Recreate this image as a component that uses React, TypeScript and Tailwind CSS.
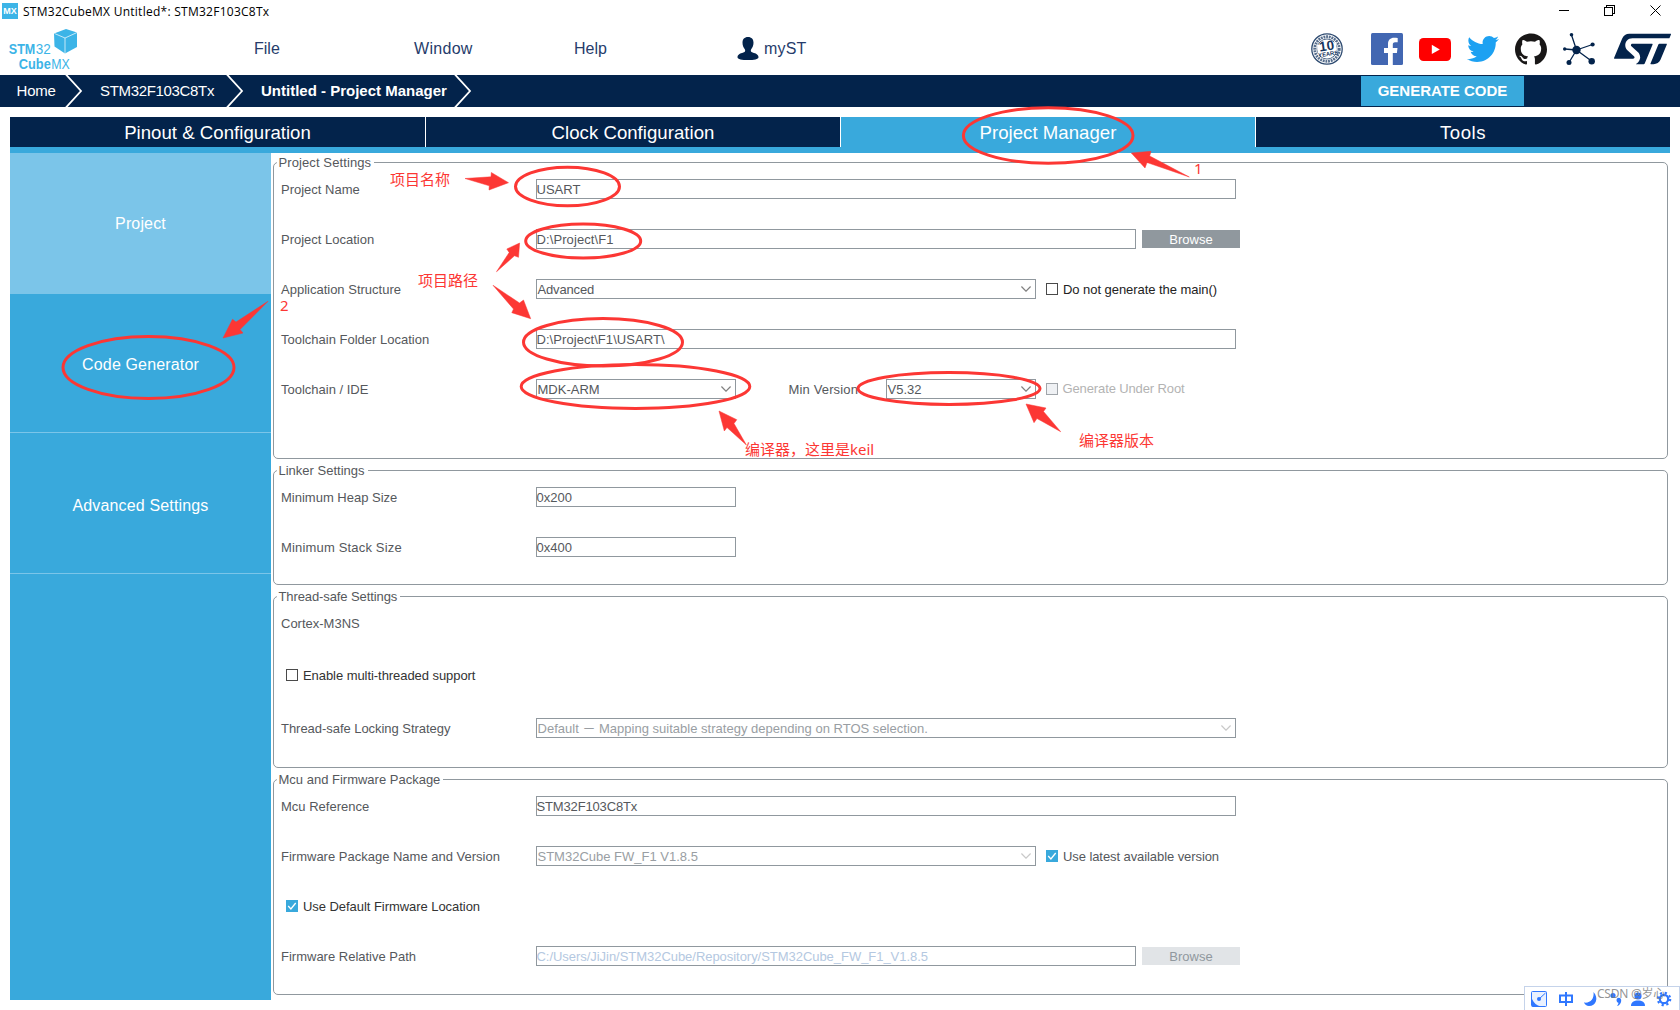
import type { ReactNode } from "react";
import { FaTwitter } from "react-icons/fa";
import { SiGithub, SiStmicroelectronics } from "react-icons/si";

const ARIAL = "font-['Liberation_Sans',Arial,sans-serif]";
const CJK = "font-['Noto_Sans','Noto_Sans_CJK_SC',sans-serif]";

function TitleBar() {
  return (
    <div className="flex h-[22px] items-center pl-[2px] pr-[19px]">
      <div className="flex h-4 w-4 items-center justify-center bg-[#3cb4e7] text-[9px] leading-none font-bold text-white">MX</div>
      <span className="ml-[5px] pt-px font-['Open_Sans','Noto_Sans',sans-serif] text-[12px] tracking-[0.26px] whitespace-nowrap text-black">
        STM32CubeMX Untitled*: STM32F103C8Tx
      </span>
      <div className="ml-auto flex items-center gap-[35px] pb-[2px] text-black">
        <svg width="11" height="11" viewBox="0 0 11 11" shapeRendering="crispEdges"><path d="M0.5 5.5h10" stroke="currentColor" /></svg>
        <svg width="11" height="11" viewBox="0 0 11 11" fill="none" stroke="currentColor" shapeRendering="crispEdges"><path d="M.5 2.5h7.5v8h-7.5zM2.5 2.5V.5h8v7.5h-2.5" /></svg>
        <svg width="11" height="11" viewBox="0 0 11 11" stroke="currentColor"><path d="M.5.5l10 10M10.5.5l-10 10" /></svg>
      </div>
    </div>
  );
}

function CubeLogo() {
  return (
    <svg className="h-[44px] w-[72px] overflow-visible" viewBox="7 29 72 44" fill="#3cb4e7">
      <path d="M54 33.500L66 29l11 3.500v14.500L65 53.500 54.500 46.500z" />
      <path d="M54.500 33.500L65 38l12-5.500M65 38V53.500" stroke="#fff" strokeWidth="0.7" fill="none" />
      <g fontFamily="'Liberation Sans Narrow','Liberation Sans',Arial,sans-serif" fontSize="15">
        <text x="8.800" y="54.300" fontWeight="700" textLength="26.500" lengthAdjust="spacingAndGlyphs">STM</text>
        <text x="35.800" y="54.300" textLength="15" lengthAdjust="spacingAndGlyphs">32</text>
        <text x="18.800" y="68.700" fontWeight="700" textLength="32" lengthAdjust="spacingAndGlyphs">Cube</text>
        <text x="51.300" y="68.700" textLength="18.500" lengthAdjust="spacingAndGlyphs">MX</text>
      </g>
    </svg>
  );
}

function LongevityBadge() {
  return (
    <svg width="32" height="32" viewBox="0 0 32 32" fill="none" stroke="#2d4a70">
      <circle cx="16" cy="16" r="15.200" strokeWidth="1.300" />
      <circle cx="16" cy="16" r="12.300" strokeWidth="2.800" strokeDasharray="1.900 0.800" opacity="0.800" />
      <circle cx="16" cy="16" r="10" strokeWidth="0.800" />
      <path d="M6 12l19-3 1 10-19 3z" fill="#fff" stroke="none" />
      <g fill="#17355e" stroke="none" fontFamily="'Liberation Sans',Arial,sans-serif" fontWeight="700" textAnchor="middle" transform="rotate(-8 16 16)">
        <text x="16" y="17.500" fontSize="13.500">10</text>
        <text x="16.500" y="23" fontSize="5.800">YEARS</text>
      </g>
    </svg>
  );
}

function Header() {
  return (
    <div className="flex h-[53px] items-start">
      <div className="w-[254px] pt-[7px] pl-[7px]"><CubeLogo /></div>
      <nav className="flex h-[53px] items-center pt-[1px] text-[16px] text-[#263c6b]">
        <span className="w-[160px]">File</span>
        <span className="w-[160px] tracking-[0.3px]">Window</span>
        <span className="w-[163px]">Help</span>
        <svg className="-mt-[2px]" width="22" height="23" viewBox="0 0 22 23" fill="#03234b">
          <path d="M11 0c3.600 0 5.500 2.200 5.500 5.600 0 2.600-.8 5-2.300 6.600-.6.700-.5 2.300.3 2.700 3 1.300 7 1.800 7 5.300 0 2.200-4.500 2.800-10.500 2.800S.5 22.400.5 20.200c0-3.500 4-4 7-5.300.8-.4.9-2 .3-2.700C6.300 10.600 5.500 8.200 5.500 5.600 5.500 2.200 7.400 0 11 0z" />
        </svg>
        <span className="ml-[5px] tracking-[0.2px]">myST</span>
      </nav>
      <div className="mt-[11px] ml-auto flex h-[32px] items-center gap-4 pr-[9px]">
        <div className="mr-3"><LongevityBadge /></div>
        <svg width="32" height="32" viewBox="0 0 32 32"><rect width="32" height="32" rx="1.500" fill="#4267b2" /><path d="M17 32V20h-4v-5h4v-4c0-4 2.500-6.200 6-6.200 1.700 0 3 .1 3.700.2v4.300h-2.500c-2 0-2.400 1-2.400 2.300V15h4.700l-.6 5h-4.100v12z" fill="#fff" /></svg>
        <svg width="32" height="23" viewBox="0 0 32 23"><rect width="32" height="23" rx="4.500" fill="#f00" /><path d="M12.800 6.800l8 4.600-8 4.700z" fill="#fff" /></svg>
        <FaTwitter className="h-8 w-8 text-[#1da1f2]" />
        <SiGithub className="h-8 w-8 text-[#191717]" />
        <svg width="32" height="32" viewBox="0 0 32 32" fill="#03234b" stroke="#03234b" strokeWidth="1.300">
          <path d="M13.500 17L8.500 2M13.500 17L29.500 11.500M13.500 17L2 16M13.500 17L6 29.500M13.500 17L28.500 28" fill="none" />
          <g stroke="none"><circle cx="13.500" cy="17" r="4.200" /><circle cx="8.500" cy="1.800" r="1.800" /><circle cx="29.600" cy="11.500" r="2.100" /><circle cx="1.700" cy="16" r="1.700" /><circle cx="6" cy="29.500" r="2.500" /><circle cx="28.700" cy="28.300" r="3.200" /></g>
        </svg>
        <SiStmicroelectronics className="ml-[3px] h-[32px] w-[57px] text-[#03234b]" viewBox="0 5.300 24 13.400" />
      </div>
    </div>
  );
}

function Crumb({ className, children }: { className: string; children: ReactNode }) {
  return (
    <div className={"flex h-8 items-center justify-between text-[15px] text-white " + className}>
      <span className="whitespace-nowrap">{children}</span>
      <svg width="18" height="32" viewBox="0 0 18 32" fill="none" stroke="#fff" strokeWidth="1.800"><path d="M.5-1L16 16 .5 33" /></svg>
    </div>
  );
}

function Breadcrumb() {
  return (
    <div className="flex h-8 items-center bg-[#03234b]">
      <Crumb className="w-[83px] pl-[16.5px] tracking-[-0.2px]">Home</Crumb>
      <Crumb className="w-[161px] pl-[17px] tracking-[-0.33px]">STM32F103C8Tx</Crumb>
      <Crumb className="w-[228px] pl-[17px]"><b>Untitled - Project Manager</b></Crumb>
      <button className="mr-[156px] ml-auto h-[30px] w-[163px] bg-[#39a9dc] text-[15px] font-bold text-white">GENERATE CODE</button>
    </div>
  );
}

function Tabs() {
  const base = "flex items-center justify-center border-r border-white pt-[1px] text-[18.6px] tracking-[0.03px] text-white ";
  return (
    <div className="mx-[10px] mt-[10px] border-b-[6px] border-[#39a9dc]">
      <div className="grid h-[30px] grid-cols-[416px_415px_415px_414px]">
        <div className={base + "bg-[#03234b]"}>Pinout &amp; Configuration</div>
        <div className={base + "bg-[#03234b]"}>Clock Configuration</div>
        <div className={base + "bg-[#39a9dc]"}>Project Manager</div>
        <div className="flex items-center justify-center bg-[#03234b] pt-[1px] text-[18.6px] tracking-[0.5px] text-white">Tools</div>
      </div>
    </div>
  );
}

function Sidebar() {
  return (
    <div className="flex w-[261px] flex-col bg-[#39a9dc] text-[16px] tracking-[0.15px] text-white">
      <div className="flex h-[141px] items-center justify-center bg-[#7bc5e9]">Project</div>
      <div className="flex h-[139px] items-center justify-center border-b border-[#7bc5e9] pt-[4px]">Code Generator</div>
      <div className="flex h-[141px] items-center justify-center border-b border-[#7bc5e9] pt-[5px]">Advanced Settings</div>
    </div>
  );
}

function Group({ title, className, titleClass = "", children }: { title: string; className: string; titleClass?: string; children: ReactNode }) {
  return (
    <section className={"relative rounded-[5px] border border-[#90989e] pt-[1px] pl-[7px] " + className}>
      <h2 className={"absolute top-[-9px] left-[3px] bg-white pr-[3px] pl-[1.5px] text-[13px] leading-[17px] " + titleClass}>{title}</h2>
      {children}
    </section>
  );
}

function Row({ label, className = "h-[50px]", children }: { label?: string; className?: string; children?: ReactNode }) {
  return (
    <div className={"flex items-center text-[13px] " + className}>
      {label && <span className="w-[255px] shrink-0 pt-[1px] whitespace-nowrap">{label}</span>}
      {children}
    </div>
  );
}

function Field({ className, children }: { className: string; children: ReactNode }) {
  return <div className={"flex h-5 shrink-0 items-center border border-[#90989e] bg-white leading-none whitespace-nowrap " + className}>{children}</div>;
}

function TextField({ className, children }: { className: string; children: ReactNode }) {
  return <Field className={className}><span className="-ml-[0.5px]">{children}</span></Field>;
}

function Select({ className, disabled = false, children }: { className: string; disabled?: boolean; children: ReactNode }) {
  return (
    <Field className={"justify-between pr-[4px] pl-[0.5px] " + className}>
      <span className={disabled ? "text-[#999ea3]" : ""}>{children}</span>
      <svg width="10" height="6" viewBox="0 0 10 6" fill="none" strokeWidth="1.200" className={disabled ? "stroke-[#c9c9c9]" : "stroke-[#808080]"}><path d="M.4.5L5 5.200 9.600.5" /></svg>
    </Field>
  );
}

function Check({ label, className = "", checked = false, disabled = false }: { label: string; className?: string; checked?: boolean; disabled?: boolean }) {
  return (
    <label className={"flex items-center gap-[5px] whitespace-nowrap " + className}>
      {checked ? (
        <svg width="12" height="12" viewBox="0 0 12 12"><rect width="12" height="12" fill="#39a9dc" /><path d="M2.200 6l2.700 3L9.700 3" stroke="#fff" strokeWidth="1.300" fill="none" /></svg>
      ) : (
        <span className={"h-3 w-3 border " + (disabled ? "border-[#a0a5aa] bg-[#eff1f4]" : "border-[#4a4a4a]")} />
      )}
      <span className={disabled ? "-ml-[0.5px]" : "pt-[1px]"}>{label}</span>
    </label>
  );
}

function Settings() {
  return (
    <div className="ml-[2px] flex w-[1395px] flex-col pt-[9px] text-[#55585c]">
      <Group title="Project Settings" className="h-[297px]" titleClass="tracking-[0.1px]">
        <Row label="Project Name"><TextField className="w-[700px]">USART</TextField></Row>
        <Row label="Project Location">
          <TextField className="w-[600px] tracking-[0.1px]">D:\Project\F1</TextField>
          <button className="ml-[6px] h-[18px] w-[98px] bg-[#90989e] leading-none text-white">Browse</button>
        </Row>
        <Row label="Application Structure">
          <Select className="w-[500px] tracking-[-0.15px]">Advanced</Select>
          <Check className="ml-[10px] tracking-[-0.05px] text-[#222]" label="Do not generate the main()" />
        </Row>
        <Row label="Toolchain Folder Location"><TextField className="w-[700px] tracking-[0.06px]">D:\Project\F1\USART\</TextField></Row>
        <Row label="Toolchain / IDE">
          <Select className="w-[200px]">MDK-ARM</Select>
          <span className="ml-[52.5px] w-[97.5px] pt-[1px] tracking-[0.15px]">Min Version</span>
          <Select className="w-[150px]">V5.32</Select>
          <Check className="ml-[10px] tracking-[-0.12px] text-[#b3b3b3]" label="Generate Under Root" disabled />
        </Row>
      </Group>
      <Group title="Linker Settings" className="mt-[11px] h-[115px]">
        <Row label="Minimum Heap Size"><TextField className="w-[200px]">0x200</TextField></Row>
        <Row className="h-[50px]">
          <span className="w-[255px] shrink-0 pt-[1px] tracking-[0.17px]">Minimum Stack Size</span>
          <TextField className="w-[200px]">0x400</TextField>
        </Row>
      </Group>
      <Group title="Thread-safe Settings" className="mt-[11px] h-[172px]" titleClass="tracking-[-0.1px]">
        <Row label="Cortex-M3NS" />
        <Row className="h-[54px]"><Check className="ml-[5px] tracking-[-0.06px] text-[#333]" label="Enable multi-threaded support" /></Row>
        <Row label="Thread-safe Locking Strategy" className="h-[52px] tracking-[-0.04px]">
          <Select className="w-[700px] font-['Liberation_Sans','Noto_Sans_CJK_SC',sans-serif] tracking-[0.01px]" disabled>Default － Mapping suitable strategy depending on RTOS selection.</Select>
        </Row>
      </Group>
      <Group title="Mcu and Firmware Package" className="mt-[11px] h-[216px]">
        <Row label="Mcu Reference"><TextField className="w-[700px] tracking-[-0.15px]">STM32F103C8Tx</TextField></Row>
        <Row label="Firmware Package Name and Version">
          <Select className="w-[500px]" disabled>STM32Cube FW_F1 V1.8.5</Select>
          <Check className="ml-[10px] tracking-[-0.08px]" label="Use latest available version" checked />
        </Row>
        <Row><Check className="ml-[5px] tracking-[-0.05px] text-[#333]" label="Use Default Firmware Location" checked /></Row>
        <Row label="Firmware Relative Path">
          <TextField className="w-[600px] tracking-[-0.04px] text-[#b4c8e1]">C:/Users/JiJin/STM32Cube/Repository/STM32Cube_FW_F1_V1.8.5</TextField>
          <button className="ml-[6px] h-[18px] w-[98px] bg-[#e1e4e7] leading-none text-[#90989e]">Browse</button>
        </Row>
      </Group>
    </div>
  );
}

/* Hand-drawn red markers laid over the window */
function Annotations() {
  const note = "absolute text-[15px] leading-5 whitespace-nowrap";
  return (
    <div className={"pointer-events-none absolute inset-0 text-[#fc3734] " + CJK}>
      <svg className="absolute inset-0" width="1680" height="1010" viewBox="0 0 1680 1010">
        <g fill="none" stroke="#fc3734" strokeWidth="3">
          <ellipse cx="1048.200" cy="135.500" rx="84.800" ry="27.800" />
          <ellipse cx="567.500" cy="186.500" rx="52" ry="19.300" />
          <ellipse cx="583.200" cy="241" rx="57.500" ry="17" />
          <ellipse cx="603" cy="342.200" rx="79.500" ry="23.700" />
          <ellipse cx="635.500" cy="386.500" rx="114.300" ry="22" />
          <ellipse cx="949" cy="388.500" rx="91" ry="16" />
          <ellipse cx="148.500" cy="367.500" rx="85.500" ry="31" />
        </g>
        <g fill="#fc3734" stroke="#fc3734" strokeWidth="0.500">
          <path d="M465 178.500l26-1.700.3-4.300 17.200 10.200-19.500 7.300.3-4.200z" />
          <path d="M496.500 271.700l12.700-19.200-2.400-3.500 12.800-6-1.100 14.300-4-1.500z" />
          <path d="M493 285.300l26.500 17.700 4-3 7.200 18.700-18.900-6 1.700-3.700z" />
          <path d="M268 301.300l-28 28.200 3 3.500-20 5 9.500-18.700 3.500 2.700z" />
          <path d="M1189.300 177l-42.300-14.500-2 5.500-13.700-15 19.700-1.700-1.300 4.700z" />
          <path d="M746.400 445l-19.400-17.500-2.700 3.500-5.300-20 17.800 8.700-2.800 3.800z" />
          <path d="M1060.700 431.700l-23.700-13.200-3 4.200-8-18.700 20 4-2.500 3.500z" />
        </g>
      </svg>
      <span className={note + " top-[169px] left-[390px]"}>项目名称</span>
      <span className={note + " top-[270px] left-[418px]"}>项目路径</span>
      <span className={note + " top-[295px] left-[280px]"}>2</span>
      <span className={note + " top-[158px] left-[1194px]"}>1</span>
      <span className={note + " top-[439px] left-[745px]"}>编译器，这里是keil</span>
      <span className={note + " top-[430px] left-[1079px]"}>编译器版本</span>
    </div>
  );
}

function InputMethodBar() {
  return (
    <div className="absolute top-[986px] left-[1524px] flex h-[30px] w-[156px] items-start border border-[#c5d3ea] bg-white">
      <svg width="154" height="24" viewBox="1525 987 154 24" fill="#2f77ff">
        <rect x="1531.500" y="991.500" width="15" height="15" rx="1" fill="#e9f1ff" stroke="#2f77ff" />
        <path d="M1532 999c2 4 4.500 6.500 9 7.500h-9z" /><circle cx="1539" cy="999" r="2" />
        <path d="M1539 999l6.500-6" stroke="#2f77ff" strokeWidth="1" />
        <path d="M1560 995.500h12v6.500h-12zM1566 992v14" fill="none" stroke="#2f77ff" strokeWidth="2" />
        <path d="M1593.500 992c5.500 6 2.500 14-4.500 14-2.500 0-4-1.200-5-3.500 6 1 10.500-3.500 9.500-10.500z" />
        <circle cx="1613" cy="995.500" r="2.600" /><path d="M1617 998.500c2-1.500 4.500-.2 4.200 2.500-.2 2.700-2 4.500-4.200 5 1-1.200 1.500-2.200 1.400-3.200-1.800-.3-2.400-2.800-1.400-4.300z" />
        <circle cx="1638" cy="996" r="3.600" /><path d="M1631 1006c0-4 3-5.500 7-5.500s7 1.500 7 5.500z" />
        <circle cx="1664" cy="999" r="4.200" fill="none" stroke="#2f77ff" strokeWidth="2.200" />
        <circle cx="1664" cy="999" r="6.200" fill="none" stroke="#2f77ff" strokeWidth="2.200" strokeDasharray="2.200 2.669" />
      </svg>
      <span className={"absolute top-[-1px] left-[72px] text-[12px] leading-4 tracking-[-0.25px] whitespace-nowrap text-[#777]/80 " + CJK}>CSDN @岁心</span>
    </div>
  );
}

export default function App() {
  return (
    <div className={"relative h-[1010px] w-[1680px] overflow-hidden bg-white " + ARIAL}>
      <TitleBar />
      <Header />
      <Breadcrumb />
      <Tabs />
      <div className="ml-[10px] flex h-[847px]">
        <Sidebar />
        <Settings />
      </div>
      <Annotations />
      <InputMethodBar />
    </div>
  );
}
